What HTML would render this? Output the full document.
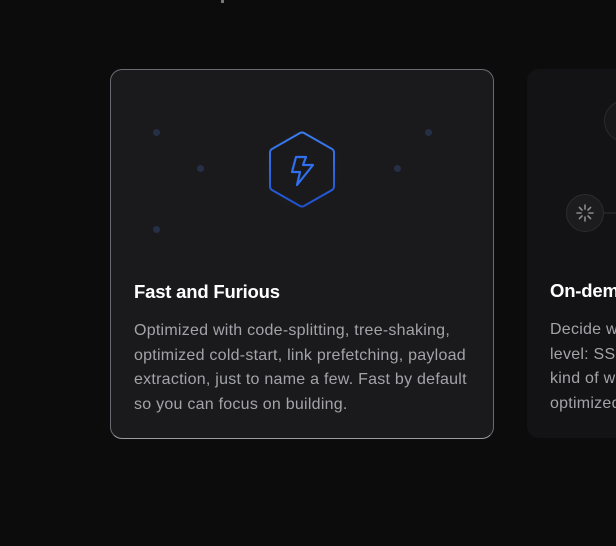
<!DOCTYPE html>
<html><head><style>
body{margin:0;width:616px;height:546px;background:#0c0c0c;overflow:hidden;position:relative;font-family:"Liberation Sans",sans-serif}
.c1{position:absolute;left:110px;top:69px;width:384px;height:370px;border-radius:12px;background:#1a1a1c;border:1px solid #6a6a70;box-sizing:border-box;border-bottom-color:#9a9aa0}
.c2{position:absolute;left:527px;top:69px;width:89px;height:369px;border-radius:12px 0 0 12px;background:#131315;overflow:hidden}
h3{position:absolute;margin:0;font-size:18.5px;font-weight:bold;color:#fff;letter-spacing:-0.2px;white-space:nowrap}
p{position:absolute;margin:0;font-size:16px;letter-spacing:0.25px;line-height:24.5px;color:#a3a3aa;white-space:nowrap}
.dot{position:absolute;width:7px;height:7px;border-radius:50%;background:#253046}
</style></head><body>
<div style="position:absolute;left:221px;top:0;width:3px;height:3px;background:#777"></div>
<div class="c1">
<div class="dot" style="left:42px;top:59px"></div>
<div class="dot" style="left:86px;top:95px"></div>
<div class="dot" style="left:42px;top:156px"></div>
<div class="dot" style="left:283px;top:95px"></div>
<div class="dot" style="left:314px;top:59px"></div>
<svg style="position:absolute;left:141px;top:54px" width="100" height="100" viewBox="0 0 100 100">
<defs><radialGradient id="g"><stop offset="0" stop-color="#2a2a30"/><stop offset="1" stop-color="#1a1a1c" stop-opacity="0"/></radialGradient>
<linearGradient id="l" x1="0" y1="0" x2="0" y2="1"><stop offset="0" stop-color="#3b7cf0"/><stop offset="1" stop-color="#1f52d0"/></linearGradient></defs>
<circle cx="50" cy="46" r="48" fill="url(#g)"/>
<path d="M48 9 Q50 8 52 9 L80 25 Q82 26 82 29 L82 62 Q82 65 80 66 L52 82 Q50 83 48 82 L20 66 Q18 65 18 62 L18 29 Q18 26 20 25 Z" fill="#1a1a1c" stroke="url(#l)" stroke-width="2"/>
<path d="M44 33 L54 33 L51 41 L61 41 L45 61 L48 48 L40 48 Z" fill="none" stroke="#2f6ff0" stroke-width="2.2" stroke-linejoin="round"/>
</svg>
<h3 style="left:23px;top:211px">Fast and Furious</h3>
<p style="left:23px;top:249px">Optimized with code-splitting, tree-shaking,<br>optimized cold-start, link prefetching, payload<br>extraction, just to name a few. Fast by default<br>so you can focus on building.</p>
</div>
<div class="c2">
<div style="position:absolute;left:77px;top:31px;width:40px;height:40px;border-radius:50%;border:1px solid #2a2a2e;background:#18181a"></div>
<div style="position:absolute;left:58px;top:143px;width:40px;height:2px;background:#222226"></div>
<div style="position:absolute;left:39px;top:125px;width:38px;height:38px;border-radius:50%;border:1px solid #2c2c30;background:#1c1c1f;box-sizing:border-box"></div>
<svg style="position:absolute;left:46px;top:132px" width="24" height="24" viewBox="-12 -12 24 24" stroke="#8a8a90" stroke-width="1.6" stroke-linecap="round">
<line x1="0" y1="-8" x2="0" y2="-4"/><line x1="0" y1="4" x2="0" y2="8"/><line x1="-8" y1="0" x2="-4" y2="0"/><line x1="4" y1="0" x2="8" y2="0"/>
<line x1="-5.6" y1="-5.6" x2="-3" y2="-3"/><line x1="3" y1="3" x2="5.6" y2="5.6"/><line x1="5.6" y1="-5.6" x2="3" y2="-3"/><line x1="-3" y1="3" x2="-5.6" y2="5.6"/>
</svg>
<h3 style="left:23px;top:211px">On-demand Rendering</h3>
<p style="left:23px;top:249px">Decide what rendering<br>level: SSR, SSG, CSR<br>kind of website<br>optimized</p>
</div>
</body></html>
